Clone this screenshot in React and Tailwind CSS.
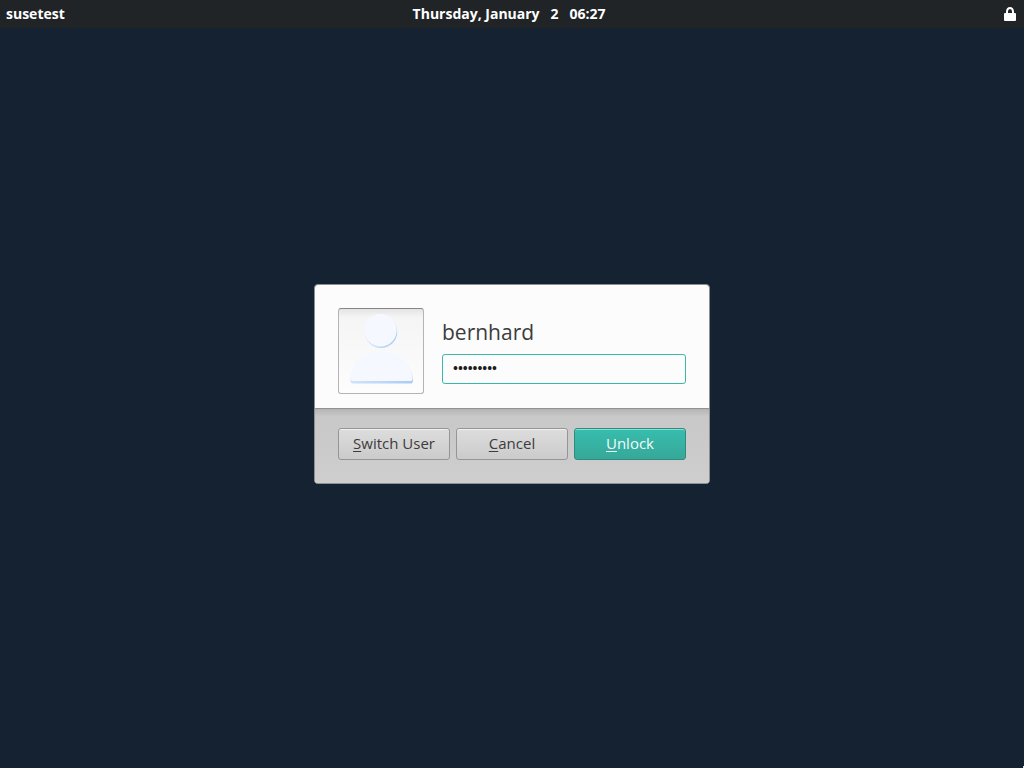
import React from "react";

function LockIcon() {
  return (
    <svg className="h-4 w-4" viewBox="0 0 16 16" role="img" aria-label="Locked">
      <path d="M5 8V5.500a3 3.500 0 0 1 6 0V8" fill="none" stroke="#fff" strokeWidth="2" />
      <rect x="2" y="7" width="12" height="8" rx="1" fill="#fff" />
    </svg>
  );
}

function Avatar() {
  return (
    <div className="h-[86px] w-[86px] shrink-0 overflow-hidden rounded-[3px] border border-[#b4b4b4] border-t-[#858585] bg-linear-to-b from-[#e4e4e4] via-[#f5f5f5] via-10% to-[#fdfdfd]">
      <svg className="h-full w-full" viewBox="0 0 84 84" aria-hidden="true">
        <defs>
          <linearGradient id="edge" x1="0" x2="1" y1="0" y2="0">
            <stop offset="0" stopColor="#d0e2fa" />
            <stop offset="1" stopColor="#aaccf4" />
          </linearGradient>
        </defs>
        <circle cx="42" cy="22.8" r="16.2" fill="url(#edge)" />
        <circle cx="41.5" cy="21.2" r="16.2" fill="#f5f9ff" />
        <path d="M11.5 71C12 56 23 43 42 43S73 56 74 71Q74 74.500 72 74.500H14Q11.500 74.500 11.500 71Z" fill="url(#edge)" />
        <path d="M11.500 69C12 54 23 42 42 42S72.500 54 73.500 69Q73.500 72 71.500 72H14Q11.500 72 11.500 69Z" fill="#f5f9ff" />
      </svg>
    </div>
  );
}

const baseButton =
  "h-8 rounded-[3px] border pb-0.5 text-[15px] leading-5";
const plainButton =
  "border-[#959595] bg-linear-to-b from-[#dddddd] to-[#cbcbcb] text-[#3c3c3c] shadow-[inset_0_1px_0_#f0f0f0]";
const primaryButton =
  "border-[#2f8a7f] bg-linear-to-b from-[#37bdad] to-[#36a899] text-[#f2fbfa] shadow-[inset_0_1px_0_#8be0d5]";

function DialogButton({ label, primary, type = "button" }) {
  return (
    <button type={type} className={`${baseButton} ${primary ? primaryButton : plainButton}`}>
      <span className="underline decoration-1 underline-offset-2">{label[0]}</span>
      {label.slice(1)}
    </button>
  );
}

export default function App() {
  return (
    <div className="relative flex min-h-screen flex-col bg-[#152232] font-['Open_Sans','Noto_Sans',sans-serif]">
      <header className="grid h-7 grid-cols-[1fr_auto_1fr] items-center bg-[#212427] px-1.5 text-sm font-bold text-white">
        <span>susetest</span>
        <time className="whitespace-pre pr-1.5">Thursday, January   2   06:27</time>
        <span className="justify-self-end">
          <LockIcon />
        </span>
      </header>
      <main className="flex grow items-center justify-center pb-7">
        <form
          className="w-full max-w-[396px] overflow-hidden rounded-sm border border-[#8d8f91] bg-[#fcfcfc]"
          onSubmit={(e) => e.preventDefault()}
        >
          <div className="flex gap-[18px] px-[23px] pt-[23px] pb-[14px]">
            <Avatar />
            <div className="flex grow flex-col pt-2.5">
              <label htmlFor="password" className="text-[21px] leading-7 text-[#3c3c3c]">
                bernhard
              </label>
              <input
                id="password"
                type="password"
                defaultValue="password1"
                className="mt-2 h-[30px] w-full rounded-[3px] border border-[#35b9a8] bg-[#fcfcfc] px-2.5 pb-0.5 text-[13px] font-bold text-[#1c1c1c] outline-none"
              />
            </div>
          </div>
          <div className="border-t border-[#929292] bg-[#cdcdcd] bg-linear-to-b from-[#b4b4b4] via-[#c8c8c8] via-10% to-[#cecece] px-[23px] pt-[19px] pb-[23px]">
            <div className="grid grid-cols-3 gap-1.5">
              <DialogButton label="Switch User" />
              <DialogButton label="Cancel" />
              <DialogButton label="Unlock" primary type="submit" />
            </div>
          </div>
        </form>
      </main>
      <span className="absolute right-0 bottom-0 h-0.5 w-px bg-[#e4e6e8]" aria-hidden="true" />
    </div>
  );
}
